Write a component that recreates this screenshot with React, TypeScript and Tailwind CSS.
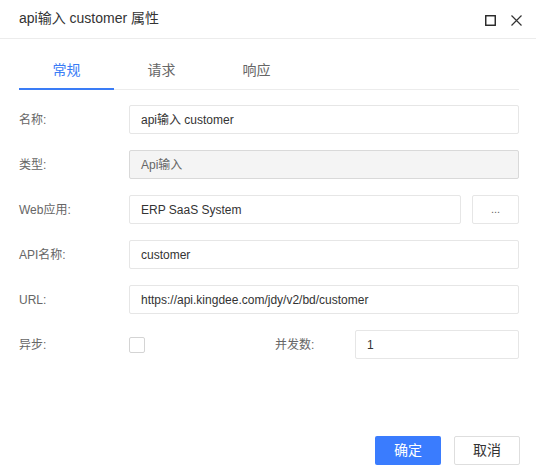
import { useState } from "react";

const font = { fontFamily: '"Liberation Sans", Arial, "Noto Sans CJK SC", sans-serif' };

const tabs = ["常规", "请求", "响应"];

function Row({ label, children }: { label: string; children: React.ReactNode }) {
  return (
    <div className="flex items-center h-[29px]">
      <div className="w-[110px] text-[12px] text-[#666]">{label}</div>
      {children}
    </div>
  );
}

function Field({ value, disabled }: { value: string; disabled?: boolean }) {
  return (
    <div
      className={`flex-1 h-[29px] flex items-center px-[11px] border rounded-[2px] text-[12px] ${
        disabled
          ? "bg-[#f4f4f4] border-[#d9d9d9] text-[#666]"
          : "bg-white border-[#e6e6e6] text-[#333]"
      }`}
    >
      {value}
    </div>
  );
}

export default function App() {
  const [tab, setTab] = useState(0);
  const [async, setAsync] = useState(false);

  return (
    <div className="w-[536px] h-[472px] bg-white flex flex-col" style={font}>
      {/* header */}
      <div className="h-[39px] border-b border-[#ececec] flex items-center pl-[19px] pr-[14px] shrink-0">
        <div className="flex-1 text-[14px] text-[#333] -mt-[1px]">api输入 customer 属性</div>
        <div className="flex items-center gap-[15px] mt-[3px]">
          <svg width="11" height="11" viewBox="0 0 11 11">
            <rect x="0.75" y="0.75" width="9.5" height="9.5" fill="none" stroke="#222" strokeWidth="1.4" />
          </svg>
          <svg width="11" height="11" viewBox="0 0 11 11">
            <path d="M0.5 0.5 L10.5 10.5 M10.5 0.5 L0.5 10.5" stroke="#333" strokeWidth="1.2" />
          </svg>
        </div>
      </div>

      {/* tabs */}
      <div className="mr-[17px] ml-[19px] mt-[13px] flex border-b border-[#ececec] h-[38px]">
        {tabs.map((t, i) => (
          <button
            key={t}
            onClick={() => setTab(i)}
            className={`w-[95px] text-[14px] flex items-center justify-center -mb-[1px] border-b-2 ${
              tab === i ? "text-[#3a7cf6] border-[#3a7cf6]" : "text-[#666] border-transparent"
            }`}
          >
            {t}
          </button>
        ))}
      </div>

      {/* form */}
      <div className="pl-[19px] pr-[17px] pt-[15px] flex flex-col gap-[16px]">
        <Row label="名称:">
          <Field value="api输入 customer" />
        </Row>
        <Row label="类型:">
          <Field value="Api输入" disabled />
        </Row>
        <Row label="Web应用:">
          <Field value="ERP SaaS System" />
          <button className="ml-[11px] w-[47px] h-[29px] border border-[#e6e6e6] rounded-[2px] text-[11px] text-[#666] leading-none">
            ...
          </button>
        </Row>
        <Row label="API名称:">
          <Field value="customer" />
        </Row>
        <Row label="URL:">
          <Field value="https://api.kingdee.com/jdy/v2/bd/customer" />
        </Row>
        <Row label="异步:">
          <div className="w-[146px] flex items-center">
            <button
              onClick={() => setAsync(!async)}
              className={`w-[16px] h-[16px] border rounded-[2px] ${
                async ? "bg-[#3a7cf6] border-[#3a7cf6]" : "bg-white border-[#d4d4d4]"
              }`}
            />
          </div>
          <div className="w-[80px] text-[12px] text-[#666]">并发数:</div>
          <Field value="1" />
        </Row>
      </div>

      {/* footer */}
      <div className="mt-auto mb-[7px] pr-[16px] flex justify-end gap-[13px]">
        <button className="w-[66px] h-[29px] rounded-[2px] bg-[#3a7cfe] text-white text-[14px]">确定</button>
        <button className="w-[66px] h-[29px] rounded-[2px] border border-[#dedede] bg-white text-[#333] text-[14px]">
          取消
        </button>
      </div>
    </div>
  );
}
